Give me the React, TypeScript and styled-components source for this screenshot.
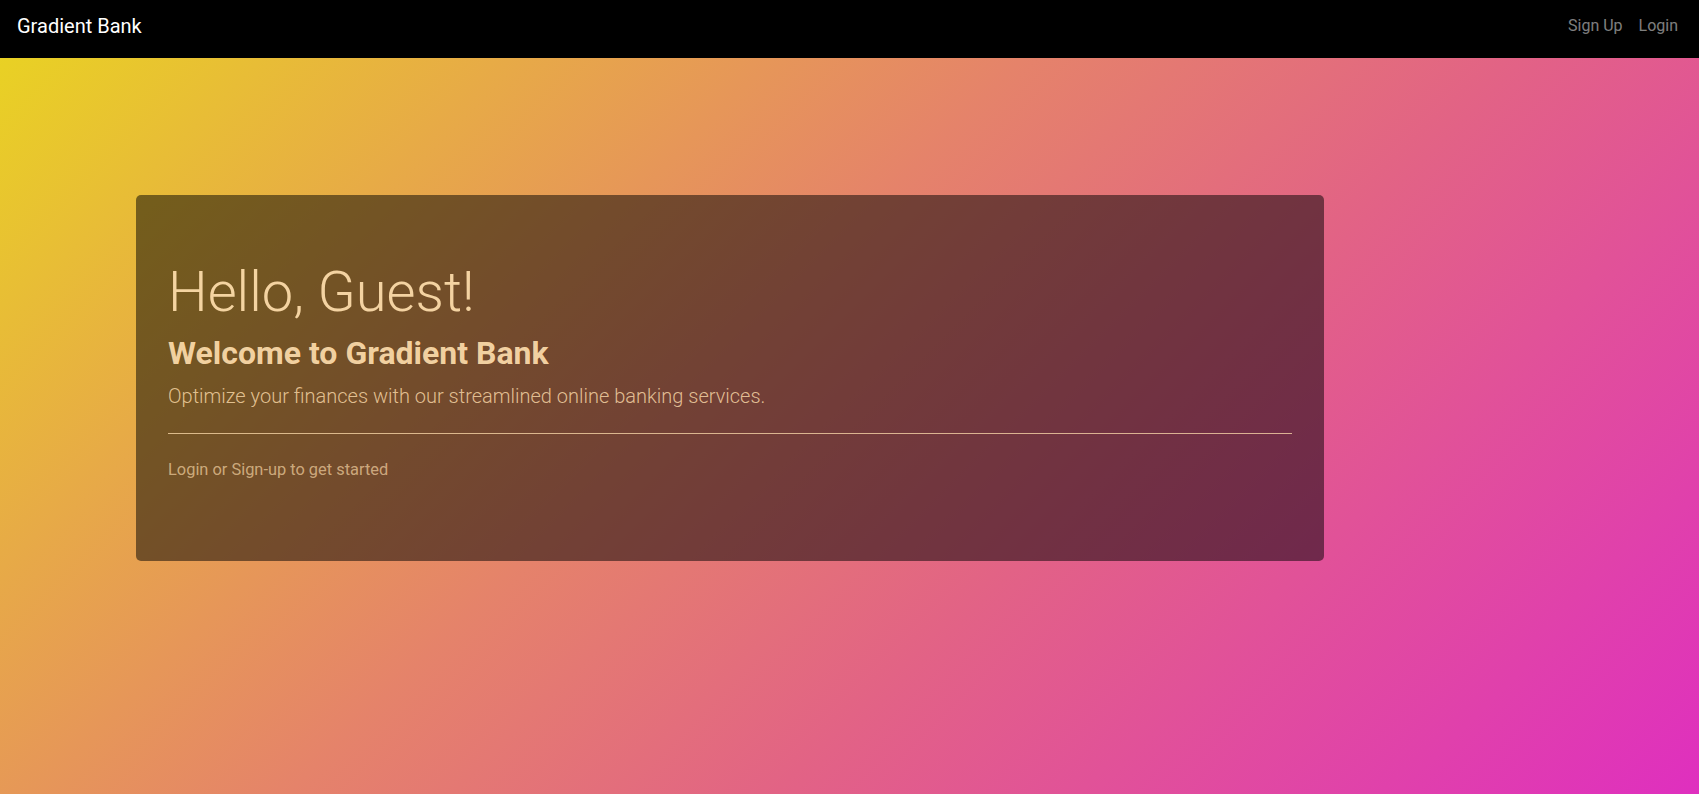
import React from "react";
import styled, { createGlobalStyle } from "styled-components";

const GlobalStyle = createGlobalStyle`
  html, body { margin: 0; padding: 0; }
  body {
    font-family: Roboto, "Liberation Sans", Arial, sans-serif;
    font-size: 16px;
    line-height: 1.5;
    background: #000;
  }
  * { box-sizing: border-box; }
`;

const Page = styled.div`
  min-height: 794px;
  display: flex;
  flex-direction: column;
`;

const NavBar = styled.nav`
  height: 58px;
  background: #000;
  display: flex;
  align-items: center;
  justify-content: space-between;
  padding: 0 13px 6px 17px;
`;

const Brand = styled.a`
  color: #fff;
  font-size: 20px;
  line-height: 30px;
  text-decoration: none;
`;

const NavLinks = styled.div`
  display: flex;
`;

const NavLink = styled.a`
  color: rgba(255, 255, 255, 0.5);
  font-size: 16px;
  line-height: 24px;
  padding: 0 8px;
  text-decoration: none;
`;

const Main = styled.main`
  flex: 1;
  background: linear-gradient(135deg, #e9d124 0%, #e5836a 42%, #e26385 62%, #df2fbf 100%);
  padding: 137px 0 0 136px;
`;

const Jumbotron = styled.section`
  width: 1188px;
  height: 366px;
  padding: 64px 32px;
  background: rgba(0, 0, 0, 0.5);
  border-radius: 5px;
  color: #ffdead;
`;

const Title = styled.h1`
  margin: 0 0 8px;
  font-size: 56px;
  font-weight: 300;
  line-height: 1.2;
  color: rgba(255, 222, 173, 0.92);
`;

const Subtitle = styled.h2`
  margin: 0 0 8px;
  font-size: 32px;
  font-weight: 700;
  line-height: 1.2;
  color: rgba(255, 222, 173, 0.92);
`;

const Lead = styled.p`
  margin: 0 0 16px;
  font-size: 20px;
  font-weight: 300;
  line-height: 1.5;
  color: rgba(255, 222, 173, 0.8);
`;

const Divider = styled.hr`
  margin: 22px 0 24px;
  border: 0;
  border-top: 1px solid rgba(255, 222, 173, 0.75);
`;

const Hint = styled.p`
  margin: 0;
  font-size: 16.4px;
  color: rgba(255, 222, 173, 0.65);
`;

export default function App() {
  return (
    <>
      <GlobalStyle />
      <Page>
        <NavBar>
          <Brand href="#">Gradient Bank</Brand>
          <NavLinks>
            <NavLink href="#">Sign Up</NavLink>
            <NavLink href="#">Login</NavLink>
          </NavLinks>
        </NavBar>
        <Main>
          <Jumbotron>
            <Title>Hello, Guest!</Title>
            <Subtitle>Welcome to Gradient Bank</Subtitle>
            <Lead>Optimize your finances with our streamlined online banking services.</Lead>
            <Divider />
            <Hint>Login or Sign-up to get started</Hint>
          </Jumbotron>
        </Main>
      </Page>
    </>
  );
}
